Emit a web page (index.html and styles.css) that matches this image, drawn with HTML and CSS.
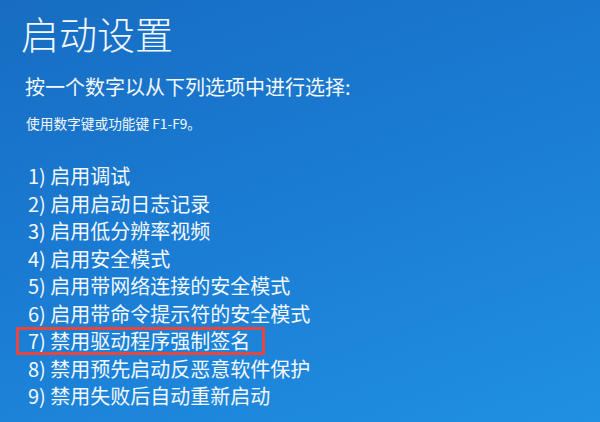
FILE: index.html
```html
<!DOCTYPE html>
<html lang="zh-CN">
<head>
<meta charset="utf-8">
<title>启动设置</title>
<link rel="stylesheet" href="styles.css">
</head>
<body>
<main class="screen">
  <h1 class="title">启动设置</h1>
  <p class="prompt">按一个数字以从下列选项中进行选择:</p>
  <p class="hint">使用数字键或功能键 F1-F9。</p>
  <ol class="options">
    <li class="option">1) 启用调试</li>
    <li class="option">2) 启用启动日志记录</li>
    <li class="option">3) 启用低分辨率视频</li>
    <li class="option">4) 启用安全模式</li>
    <li class="option">5) 启用带网络连接的安全模式</li>
    <li class="option">6) 启用带命令提示符的安全模式</li>
    <li class="option option-marked">7) 禁用驱动程序强制签名</li>
    <li class="option">8) 禁用预先启动反恶意软件保护</li>
    <li class="option">9) 禁用失败后自动重新启动</li>
  </ol>
</main>
</body>
</html>
```
FILE: styles.css
```css
html, body {
  margin: 0;
  padding: 0;
  width: 600px;
  height: 422px;
  overflow: hidden;
}

body {
  font-family: "Noto Sans CJK SC", "Noto Sans", sans-serif;
  color: #f5f8fc;
  background: linear-gradient(160deg, #176dc2 0%, #1a7bd2 45%, #2090e2 100%);
}

.screen {
  display: flex;
  flex-direction: column;
  padding: 14px 0 0 0;
  box-sizing: border-box;
  height: 422px;
}

.title {
  margin: 0 0 0 21px;
  font-family: "Noto Sans CJK SC Light", "Noto Sans CJK SC", sans-serif;
  font-weight: 300;
  font-size: 38px;
  line-height: 38px;
}

.prompt {
  margin: 25px 0 0 25px;
  font-size: 20px;
  line-height: 20px;
}

.hint {
  margin: 19px 0 0 26px;
  font-size: 13.7px;
  line-height: 14px;
}

.options {
  list-style: none;
  margin: 32px 0 0 0;
  padding: 0 0 0 28px;
  display: flex;
  flex-direction: column;
  align-items: flex-start;
}

.option {
  font-size: 20px;
  line-height: 27.5px;
  white-space: nowrap;
}

.option-marked {
  margin-left: -12px;
  padding: 0 15px 0 12px;
  outline: 3px solid #e8463d;
  outline-offset: -3px;
}
```
